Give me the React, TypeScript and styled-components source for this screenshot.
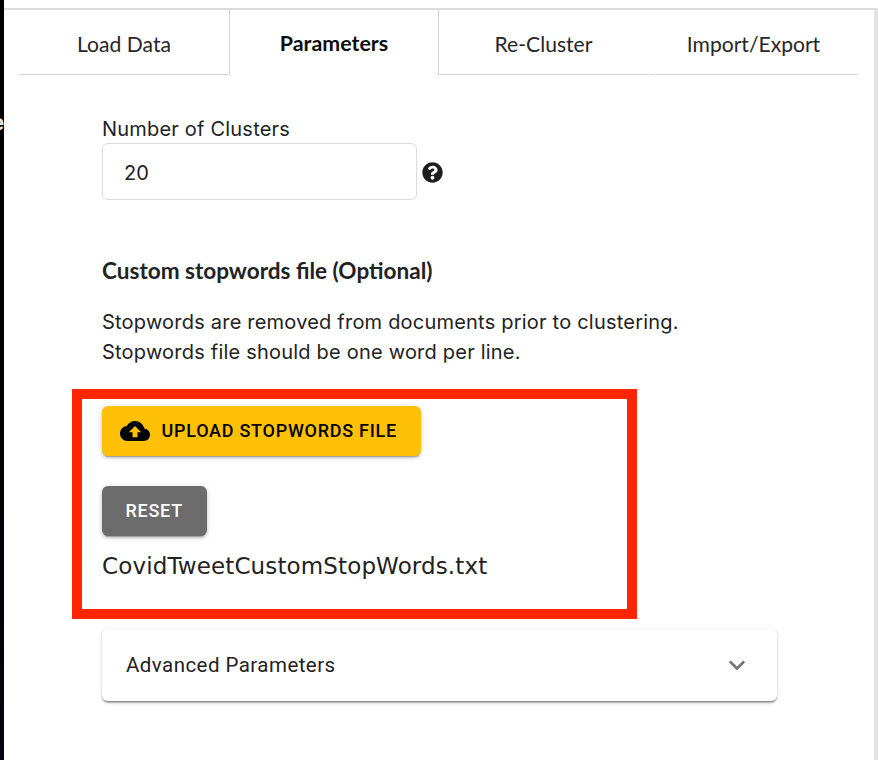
import React from "react";
import styled, { createGlobalStyle, css } from "styled-components";

const GlobalStyle = createGlobalStyle`
  *, *::before, *::after { box-sizing: border-box; }
  body { margin: 0; background: #fff; overflow: hidden; }
`;

const Page = styled.div`
  display: flex;
  width: 878px;
  height: 760px;
  overflow: hidden;
  background: #fff;
  color: #222;
  font-family: Inter, "Liberation Sans", sans-serif;
`;

const Backdrop = styled.div`
  display: flex;
  justify-content: flex-end;
  flex: none;
  width: 4px;
  padding-top: 110px;
  overflow: hidden;
  background: linear-gradient(#000 0%, #000 40%, #00060e 100%);
  color: #e6e6e6;
  font: 700 22px/26px Roboto, sans-serif;
`;

const Dialog = styled.div`
  flex: 1;
  display: flex;
  flex-direction: column;
  padding-top: 8px;
`;

const Scroller = styled.div`
  flex: 1;
  display: flex;
  border-top: 2px solid #dcdcdc;
`;

const Content = styled.div`
  flex: 1;
  padding-left: 15px;
`;

const ScrollTrack = styled.div`
  flex: none;
  width: 4px;
  background: #e4e4e4;
`;

const TabList = styled.nav`
  display: grid;
  grid-template-columns: 211px 208px 210px 210px;
  width: 839px;
  height: 65px;
`;

const Tab = styled.button<{ $active?: boolean; $edge?: "left" | "right" }>`
  appearance: none;
  border: 0 solid #d4d4d5;
  border-bottom-width: ${(p) => (p.$active ? 0 : "1px")};
  ${(p) => p.$edge === "left" && css`border-left-width: 1px;`}
  ${(p) => p.$edge === "right" && css`border-right-width: 1px;`}
  background: none;
  padding: ${(p) => (p.$active ? "1px 0 0" : "3px 0 0")};
  color: ${(p) => (p.$active ? "#0d0d0d" : "#262626")};
  font: ${(p) => (p.$active ? "700 21.4px" : "400 21.1px")} / 30px Lato, sans-serif;

  &:last-child {
    margin-left: 1px;
  }
`;

const Form = styled.main`
  display: flex;
  flex-direction: column;
  align-items: flex-start;
  padding: 39px 0 0 83px;
`;

const Label = styled.label`
  height: 29px;
  font-size: 20px;
  line-height: 30px;
  letter-spacing: 0.2px;
`;

const FieldRow = styled.div`
  display: flex;
  align-items: center;
  gap: 5px;
`;

const NumberInput = styled.input`
  width: 315px;
  height: 57px;
  padding: 2px 21px 0;
  border: 1px solid #dcdcdd;
  border-radius: 6px;
  outline: 0;
  color: #222;
  font: 400 20px/30px Inter, sans-serif;
`;

const Heading = styled.h4`
  margin: 56px 0 0;
  font: 700 22.55px/30px Lato, sans-serif;
`;

const Description = styled.p`
  margin: 21px 0 22px;
  font-size: 20px;
  line-height: 30px;
  letter-spacing: 0.21px;
  white-space: nowrap;
`;

const Highlight = styled.section`
  display: flex;
  flex-direction: column;
  align-items: flex-start;
  width: 565px;
  height: 230px;
  margin-left: -30px;
  padding: 7px 20px 0;
  border: 10px solid #ff2600;
`;

const Button = styled.button<{ $tone: "amber" | "grey" }>`
  display: flex;
  align-items: center;
  height: 50px;
  border: 0;
  border-radius: 6px;
  font: 500 18px/30px Roboto, sans-serif;
  letter-spacing: 0.74px;
  white-space: nowrap;
  box-shadow: 0 3px 1px -2px rgba(0, 0, 0, 0.2), 0 2px 3px rgba(0, 0, 0, 0.16),
    0 1px 6px rgba(0, 0, 0, 0.14);
  ${(p) =>
    p.$tone === "amber"
      ? css`
          width: 319px;
          padding: 0 0 0 18px;
          gap: 11.5px;
          background: #ffc107;
          color: #000;
        `
      : css`
          width: 105px;
          margin-top: 30px;
          padding: 0 0 0 23.5px;
          background: #6c6c6c;
          color: #fff;
        `}
`;

const FileName = styled.div`
  margin-top: 14px;
  font: 400 23px/32px "DejaVu Sans", sans-serif;
  letter-spacing: 0.13px;
`;

const Accordion = styled.button`
  display: flex;
  align-items: center;
  justify-content: space-between;
  width: 675px;
  height: 72px;
  margin-top: 10px;
  padding: 0 22px 0 24px;
  border: 0;
  border-radius: 6px;
  background: #fff;
  color: #222;
  font: 400 20.5px/30px Roboto, sans-serif;
  letter-spacing: 0.45px;
  box-shadow: 0 3px 1px -2px rgba(0, 0, 0, 0.2), 0 1.5px 1.5px rgba(0, 0, 0, 0.24),
    0 1.5px 4.5px rgba(0, 0, 0, 0.12);
`;

const HelpGlyph = styled.svg`
  display: block;
  margin-top: 1px;
`;

const HelpIcon = () => (
  <HelpGlyph width="21" height="21" viewBox="0 0 512 512" fill="#1e1e1e">
    <path d="M504 256c0 137-111 248-248 248S8 393 8 256 119 8 256 8s248 111 248 248zM262.700 90c-54.500 0-89.300 23-116.500 63.800-3.500 5.300-2.400 12.400 2.700 16.300l34.700 26.300c5.200 3.900 12.600 3 16.700-2.100 17.900-22.700 30.100-35.800 57.300-35.800 20.400 0 45.700 13.100 45.700 33 0 15-12.400 22.700-32.500 34C247.100 238.500 216 254.900 216 296v4c0 6.600 5.400 12 12 12h56c6.600 0 12-5.400 12-12v-1.300c0-28.500 83.200-29.600 83.200-106.700 0-58-60.200-102-116.500-102zM256 338c-25.400 0-46 20.600-46 46s20.600 46 46 46 46-20.600 46-46-20.600-46-46-46z" />
  </HelpGlyph>
);

const CloudUploadIcon = () => (
  <svg width="30" height="30" viewBox="0 0 24 24" fill="currentColor">
    <path d="M19.350 10.040C18.670 6.590 15.640 4 12 4 9.110 4 6.600 5.640 5.350 8.040 2.340 8.360 0 10.910 0 14c0 3.310 2.690 6 6 6h13c2.760 0 5-2.240 5-5 0-2.640-2.050-4.780-4.650-4.960zM14 13v4h-4v-4H7l5-5 5 5h-3z" />
  </svg>
);

const ExpandIcon = () => (
  <svg width="36" height="36" viewBox="0 0 24 24" fill="#757575">
    <path d="M16.590 8.590 12 13.170 7.410 8.590 6 10l6 6 6-6z" transform="translate(1.2 1.2) scale(.9)" />
  </svg>
);

export default function App() {
  return (
    <>
      <GlobalStyle />
      <Page>
        <Backdrop>e</Backdrop>
        <Dialog>
          <Scroller>
            <Content>
              <TabList>
                <Tab $edge="right">Load Data</Tab>
                <Tab $active>Parameters</Tab>
                <Tab $edge="left">Re-Cluster</Tab>
                <Tab>Import/Export</Tab>
              </TabList>
              <Form>
                <Label htmlFor="clusters">Number of Clusters</Label>
                <FieldRow>
                  <NumberInput id="clusters" defaultValue="20" />
                  <HelpIcon />
                </FieldRow>
                <Heading>Custom stopwords file (Optional)</Heading>
                <Description>
                  Stopwords are removed from documents prior to clustering.
                  <br />
                  Stopwords file should be one word per line.
                </Description>
                <Highlight>
                  <Button $tone="amber">
                    <CloudUploadIcon />
                    UPLOAD STOPWORDS FILE
                  </Button>
                  <Button $tone="grey">RESET</Button>
                  <FileName>CovidTweetCustomStopWords.txt</FileName>
                </Highlight>
                <Accordion>
                  Advanced Parameters
                  <ExpandIcon />
                </Accordion>
              </Form>
            </Content>
            <ScrollTrack />
          </Scroller>
        </Dialog>
      </Page>
    </>
  );
}
